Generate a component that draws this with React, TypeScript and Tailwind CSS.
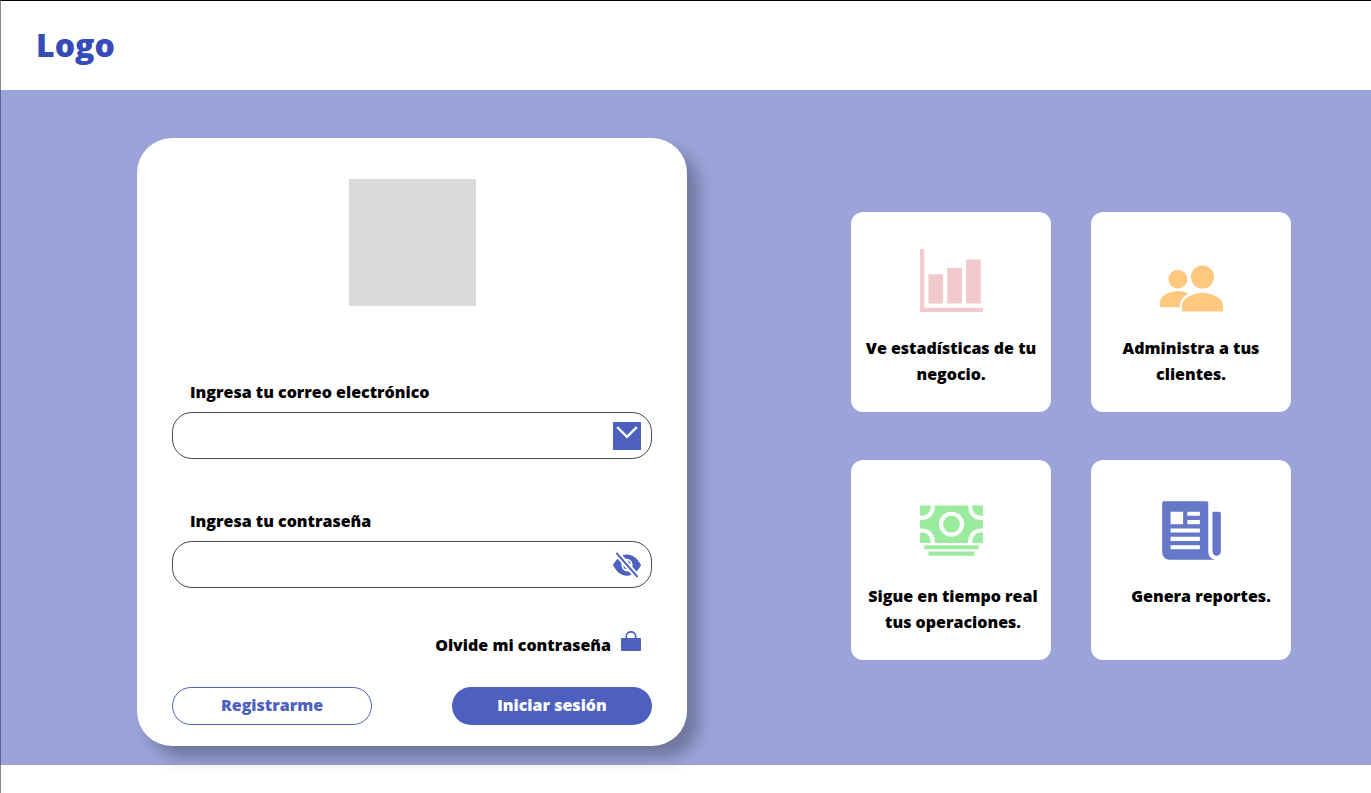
import type { ReactNode } from "react";
import {
  IoBarChartSharp,
  IoCashSharp,
  IoEyeOffSharp,
  IoNewspaperSharp,
  IoPeopleSharp,
} from "react-icons/io5";

function MailIcon() {
  return (
    <svg viewBox="0 0 28 28" className="size-7" aria-hidden="true">
      <rect width="28" height="28" rx="0.6" fill="#4d60c0" />
      <path d="M4.2 5.2 14 14.8l9.8-9.6" fill="none" stroke="#fff" strokeWidth="2.4" />
    </svg>
  );
}

function LockIcon() {
  return (
    <svg viewBox="0 0 20 20" className="size-5" aria-hidden="true">
      <rect y="7" width="20" height="13" rx="0.4" fill="#4d60c0" />
      <path d="M5.3 8V5.2a4.7 4.4 0 0 1 9.4 0V8" fill="none" stroke="#4d60c0" strokeWidth="1.7" />
    </svg>
  );
}

type FieldProps = { id: string; label: string; type: string; children: ReactNode };

function Field({ id, label, type, children }: FieldProps) {
  return (
    <div>
      <label htmlFor={id} className="block pl-[18px] leading-[26px]">
        {label}
      </label>
      <div className="mt-[7px] flex h-[47px] items-center rounded-[20px] border border-[#4a4a4a] pr-2.5">
        <input id={id} type={type} className="h-full min-w-0 flex-1 rounded-[20px] bg-transparent px-4 outline-none" />
        {children}
      </div>
    </div>
  );
}

function Feature({ icon, className, children }: { icon: ReactNode; className: string; children: ReactNode }) {
  return (
    <li className="h-[200px] rounded-xl bg-white pt-[35px]">
      <div className="flex h-22 justify-center">{icon}</div>
      <p className={`text-center leading-[26px] ${className}`}>{children}</p>
    </li>
  );
}

export default function App() {
  return (
    <div className="min-h-screen border-t border-l border-t-black border-l-[#888] bg-white font-['Open_Sans',sans-serif] text-base font-extrabold text-black">
      <header className="flex h-[89px] items-center px-[35px] pb-0.5">
        <a href="#" className="text-[32px] leading-10 text-[#344bb8]">
          Logo
        </a>
      </header>
      <main className="-ml-px flex items-start justify-between border-l border-[#5f669c] bg-[#9aa4da] pt-12 pr-20 pb-[19px] pl-[136px]">
        <form
          className="w-[550px] rounded-[35px] bg-white px-[35px] pt-[41px] pb-[21px] shadow-[12px_12px_16px_rgba(0,0,0,0.28)]"
          onSubmit={(e) => e.preventDefault()}
        >
          <div className="mx-auto size-[127px] bg-[#d9d9d9]" />
          <div className="mt-[73px] flex flex-col gap-[49px]">
            <Field id="email" label="Ingresa tu correo electrónico" type="email">
              <MailIcon />
            </Field>
            <Field id="password" label="Ingresa tu contraseña" type="password">
              <button type="button" aria-label="Mostrar contraseña" className="flex w-7 justify-center">
                <IoEyeOffSharp preserveAspectRatio="none" className="h-[34px] w-[30px] shrink-0 text-[#4d60c0]" />
              </button>
            </Field>
          </div>
          <div className="mt-[43px] flex justify-end pr-[11px]">
            <a href="#" className="flex gap-2.5 leading-7">
              Olvide mi contraseña
              <LockIcon />
            </a>
          </div>
          <div className="mt-7 flex justify-between">
            <button type="submit" className="order-2 h-[38px] w-[200px] rounded-full bg-[#4d60c0] pb-0.5 text-white">
              Iniciar sesión
            </button>
            <button type="button" className="h-[38px] w-[200px] rounded-full border border-[#4d60c0] pb-0.5 text-[#4d60c0]">
              Registrarme
            </button>
          </div>
        </form>
        <ul className="mt-[74px] grid grid-cols-[200px_200px] gap-x-10 gap-y-12">
          <Feature className="" icon={<IoBarChartSharp className="size-[67px] text-[#f2cacb]" />}>
            Ve estadísticas de tu negocio.
          </Feature>
          <Feature className="px-6" icon={<IoPeopleSharp className="mt-2 size-[67px] text-[#ffc87f]" />}>
            Administra a tus clientes.
          </Feature>
          <Feature className="pl-1" icon={<IoCashSharp className="mt-0.5 size-[67px] text-[#9aeb9d]" />}>
            Sigue en tiempo real tus operaciones.
          </Feature>
          <Feature className="pl-5" icon={<IoNewspaperSharp className="mt-0.5 size-[67px] text-[#6677c9]" />}>
            Genera reportes.
          </Feature>
        </ul>
      </main>
    </div>
  );
}
